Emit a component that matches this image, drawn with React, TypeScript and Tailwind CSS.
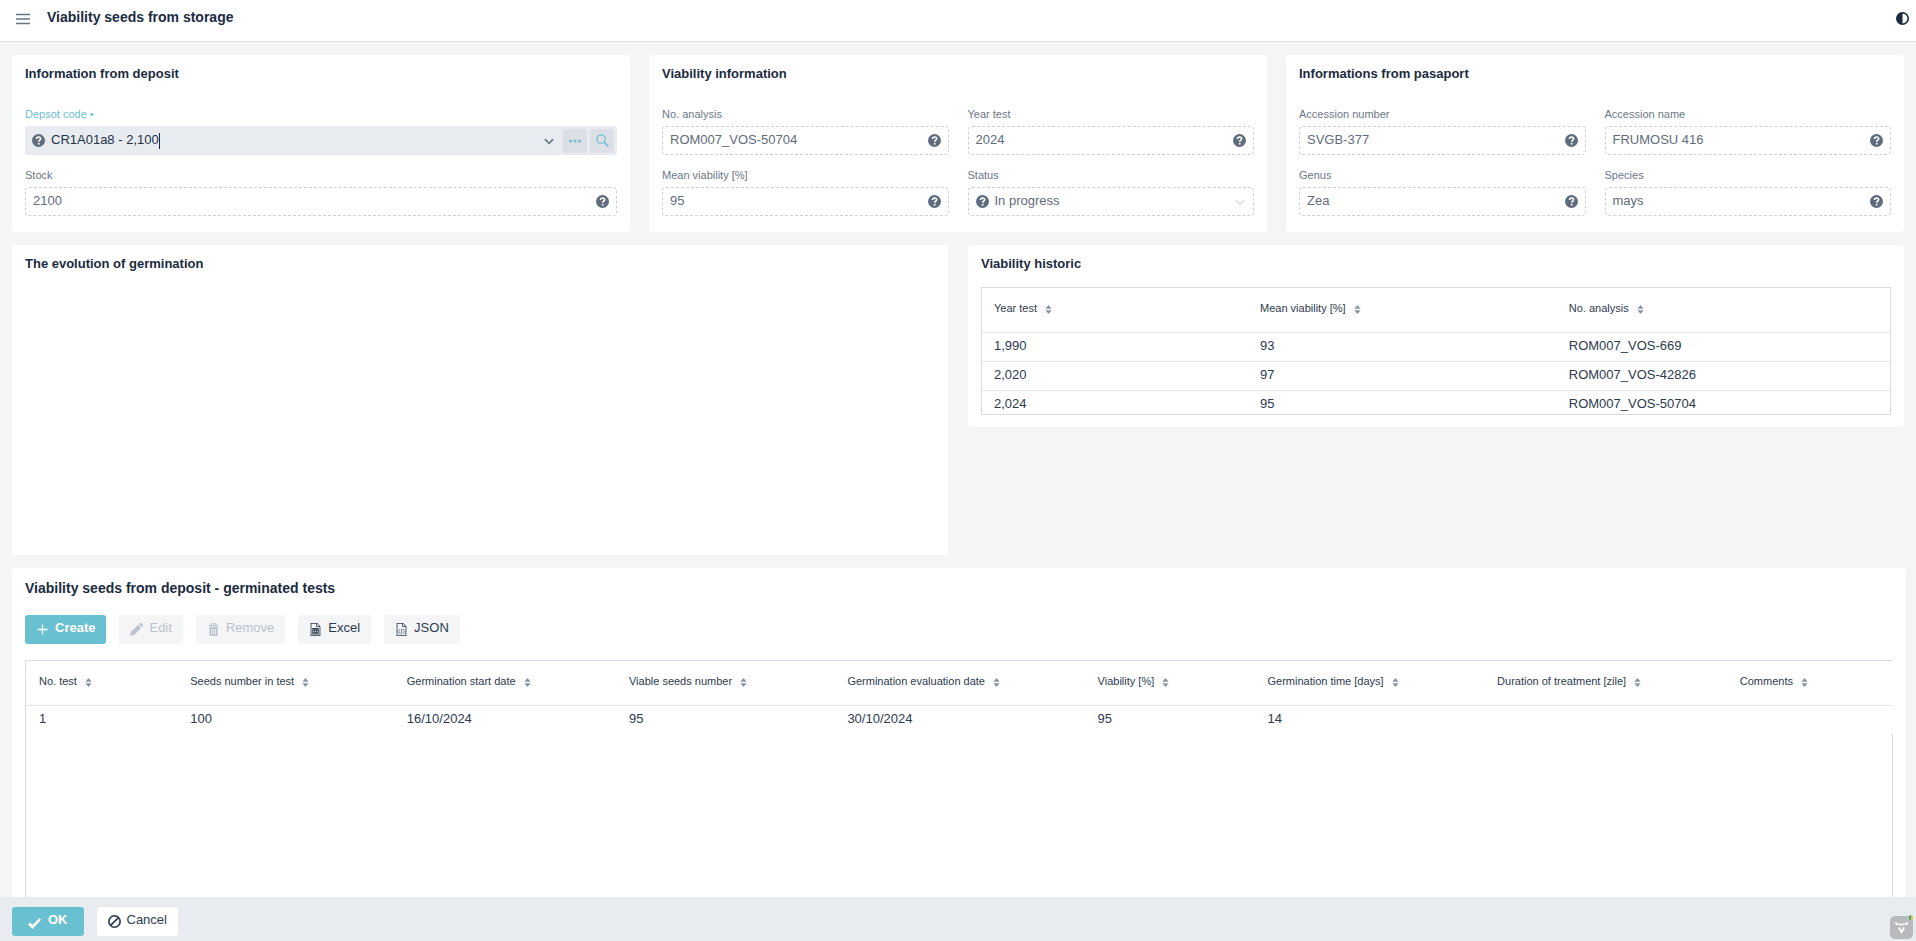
import { useId, type ReactNode } from "react";

type IconProps = { className?: string };

function Svg({ className = "size-4", children }: IconProps & { children: ReactNode }) {
  return (
    <svg viewBox="0 0 16 16" fill="currentColor" aria-hidden="true" className={`shrink-0 ${className}`}>
      {children}
    </svg>
  );
}

function HelpIcon() {
  return (
    <svg viewBox="0 0 16 16" fill="none" aria-hidden="true" className="size-[13px] shrink-0 text-[#5f6c7d]">
      <circle cx="8" cy="8" r="8" fill="currentColor" />
      <path d="M5.6 6.2c0-1.5 1-2.5 2.5-2.5s2.5.9 2.5 2.2c0 1.7-2.3 1.8-2.3 3.6" stroke="#fff" strokeWidth="2" />
      <path d="M7.2 10.9h2.1V13H7.2z" fill="#fff" />
    </svg>
  );
}

function ChevronIcon({ className }: IconProps) {
  return (
    <svg viewBox="0 0 16 16" fill="none" stroke="currentColor" strokeWidth="2.2" aria-hidden="true" className={`shrink-0 ${className}`}>
      <path d="m2.500 5.500 5.500 5.500 5.500-5.500" />
    </svg>
  );
}

function SortIcon() {
  return (
    <Svg className="mt-1 size-[9px] text-[#8793a5]">
      <path d="M8 0 13.5 6.500h-11z" />
      <path d="M8 16 2.500 9.500h11z" />
    </Svg>
  );
}

function SortButton({ label }: { label: string }) {
  return (
    <button type="button" className="flex items-center gap-[7px] pb-1 whitespace-nowrap">
      {label}
      <SortIcon />
    </button>
  );
}

function Card({ title, className = "", children }: { title: string; className?: string; children?: ReactNode }) {
  return (
    <section className={`rounded-[3px] bg-white px-[13px] pt-[9px] ${className}`}>
      <h3 className="text-[13px] leading-5 font-bold text-[#1b2b41]">{title}</h3>
      {children}
    </section>
  );
}

function ReadOnlyField({ label, value }: { label: string; value: string }) {
  const id = useId();
  return (
    <div className="flex min-w-0 flex-col gap-1">
      <label htmlFor={id} className="text-[11px] leading-4 text-[#6b7889]">{label}</label>
      <div className="flex h-[29px] items-center rounded-[4px] border border-dashed border-[#cdd1d8] px-[7px]">
        <input id={id} readOnly value={value} className="min-w-0 flex-1 pb-0.5 text-[13px] text-[#5f6c7d] outline-none" />
        <HelpIcon />
      </div>
    </div>
  );
}

function StatusField() {
  return (
    <div className="flex min-w-0 flex-col gap-1">
      <label htmlFor="status" className="text-[11px] leading-4 text-[#6b7889]">Status</label>
      <div className="flex h-[29px] items-center gap-[6px] rounded-[4px] border border-dashed border-[#cdd1d8] px-[7px]">
        <HelpIcon />
        <select id="status" disabled className="min-w-0 flex-1 appearance-none pb-0.5 text-[13px] text-[#5f6c7d] opacity-100">
          <option>In progress</option>
        </select>
        <ChevronIcon className="size-3 text-[#dde2e8]" />
      </div>
    </div>
  );
}

function DepositCodeField() {
  return (
    <div className="flex flex-col gap-1">
      <label htmlFor="deposit-code" className="text-[11px] leading-4 text-[#69c0d1]">Depsot code •</label>
      <div className="flex h-[29px] items-center rounded-[3px] bg-[#e8ebef] pr-[3px] pl-[7px]">
        <HelpIcon />
        <div className="ml-[6px] flex min-w-0 flex-1 items-center">
          <input
            id="deposit-code"
            defaultValue="CR1A01a8 - 2,100"
            className="field-sizing-content pb-0.5 text-[13px] text-[#243348] outline-none"
          />
          <span className="h-4 w-px bg-[#1b2b41]" />
        </div>
        <button type="button" aria-label="Open list" className="mr-2">
          <ChevronIcon className="size-3 text-[#66748a]" />
        </button>
        <button type="button" aria-label="More" className="flex size-6 items-center justify-center rounded-[3px] bg-[#dce0e6] text-[#69c0d1]">
          <Svg className="size-3">
            <circle cx="2" cy="8" r="2" />
            <circle cx="8" cy="8" r="2" />
            <circle cx="14" cy="8" r="2" />
          </Svg>
        </button>
        <button type="button" aria-label="Search" className="ml-[3px] flex size-6 items-center justify-center rounded-[3px] bg-[#dce0e6] text-[#69c0d1]">
          <svg viewBox="0 0 16 16" fill="none" stroke="currentColor" aria-hidden="true" className="size-[13px]">
            <circle cx="6.2" cy="6.2" r="5.2" strokeWidth="1.5" />
            <path d="m10 10 5.2 5.2" strokeWidth="2" />
          </svg>
        </button>
      </div>
    </div>
  );
}

const history = [
  ["1,990", "93", "ROM007_VOS-669"],
  ["2,020", "97", "ROM007_VOS-42826"],
  ["2,024", "95", "ROM007_VOS-50704"],
];

function HistoryTable() {
  return (
    <div className="mt-[13px] h-32 overflow-hidden border border-[#d8dce2]">
      <table className="w-full table-fixed text-left text-[13px] text-[#2c3b50]">
        <colgroup>
          <col className="w-[29.3%]" />
          <col className="w-[34%]" />
          <col />
        </colgroup>
        <thead>
          <tr className="h-[44px] border-b border-[#e4e7eb] text-[11px]">
            {["Year test", "Mean viability [%]", "No. analysis"].map((label) => (
              <th key={label} className="pl-3 font-normal"><SortButton label={label} /></th>
            ))}
          </tr>
        </thead>
        <tbody>
          {history.map((row) => (
            <tr key={row[0]} className="h-[29px] border-b border-[#e4e7eb]">
              {row.map((cell) => (
                <td key={cell} className="pb-0.5 pl-3">{cell}</td>
              ))}
            </tr>
          ))}
        </tbody>
      </table>
    </div>
  );
}

const testColumns = [
  { label: "No. test", value: "1", width: "w-[8.1%]" },
  { label: "Seeds number in test", value: "100", width: "w-[11.6%]" },
  { label: "Germination start date", value: "16/10/2024", width: "w-[11.9%]" },
  { label: "Viable seeds number", value: "95", width: "w-[11.7%]" },
  { label: "Germination evaluation date", value: "30/10/2024", width: "w-[13.4%]" },
  { label: "Viability [%]", value: "95", width: "w-[9.1%]" },
  { label: "Germination time [days]", value: "14", width: "w-[12.3%]" },
  { label: "Duration of treatment [zile]", value: "", width: "w-[13%]" },
  { label: "Comments", value: "", width: "w-[8.9%]" },
];

function TestsTable() {
  return (
    <div className="mt-4 flex-1 border-x border-t border-[#d8dce2]">
      <div className="-mr-px bg-white">
        <table className="w-full table-fixed text-left text-[13px] text-[#2c3b50]">
          <thead>
            <tr className="h-[44px] border-b border-[#e4e7eb] text-[11px]">
              {testColumns.map((col) => (
                <th key={col.label} className={`pl-[13px] font-normal ${col.width}`}><SortButton label={col.label} /></th>
              ))}
            </tr>
          </thead>
          <tbody>
            <tr className="h-[29px]">
              {testColumns.map((col) => (
                <td key={col.label} className="pb-0.5 pl-[13px]">{col.value}</td>
              ))}
            </tr>
          </tbody>
        </table>
      </div>
    </div>
  );
}

function Toolbar() {
  const plain = "flex h-[29px] items-center gap-[6px] rounded-[3px] bg-[#f3f5f7] px-[11px]";
  return (
    <div className="mt-[15px] flex gap-[13px] text-[13px]">
      <button type="button" className="flex h-[29px] items-center gap-[6px] rounded-[3px] bg-[#69c0d1] px-[11px] font-bold text-white">
        <Svg className="size-[13px]">
          <path d="M7.200 2h1.600v5.200H14v1.600H8.800V14H7.200V8.800H2V7.200h5.200z" />
        </Svg>
        <span className="pb-1">Create</span>
      </button>
      <button type="button" disabled className={`${plain} text-[#bcc3cd]`}>
        <Svg className="size-[13px]">
          <path d="M0 16l1.200-5L9.800 2.400l3.800 3.800L5 14.800zM11 1.600l1.200-1.200c.5-.5 1.400-.5 1.900 0l1.500 1.500c.5.5.5 1.400 0 1.900l-1.200 1.200z" />
        </Svg>
        <span className="pb-1">Edit</span>
      </button>
      <button type="button" disabled className={`${plain} text-[#bcc3cd]`}>
        <Svg className="size-[13px]">
          <path
            fillRule="evenodd"
            d="M3 5v9.500c0 .8.500 1.500 1.300 1.500h7.400c.8 0 1.300-.7 1.300-1.500V5zm3 9H5V7h1zm2.500 0h-1V7h1zM11 14h-1V7h1zM13.500 2H11V1c0-.6-.4-1-1-1H6c-.6 0-1 .4-1 1v1H2.500L2 4h12zM10 2H6V1h4z"
          />
        </Svg>
        <span className="pb-1">Remove</span>
      </button>
      <button type="button" className={`${plain} text-[#2c3b50]`}>
        <Svg className="size-[13px]">
          <path fillRule="evenodd" d="M10 0H2v16h12V4zM9 1v4h4v10H3V1zm1 0 3 3h-3z" />
          <path fillRule="evenodd" d="M4 6h8v8H4zm1 2v1h1.500V8zm2.500 0v1H9V8zM10 8v1h1V8zm-5 2v1h1.500v-1zm2.500 0v1H9v-1zm2.500 0v1h1v-1zm-5 2v1h1.500v-1zm2.500 0v1H9v-1zm2.500 0v1h1v-1z" />
        </Svg>
        <span className="pb-1">Excel</span>
      </button>
      <button type="button" className={`${plain} text-[#2c3b50]`}>
        <Svg className="size-[13px]">
          <path fillRule="evenodd" d="M10 0H2v16h12V4zM9 1v4h4v10H3V1zm1 0 3 3h-3z" />
          <path d="M6.200 7.500 4 10.500l2.200 3M9.800 7.500l2.200 3-2.200 3M8.600 7l-1.200 7" fill="none" stroke="currentColor" strokeWidth=".8" />
        </Svg>
        <span className="pb-1">JSON</span>
      </button>
    </div>
  );
}

export default function App() {
  return (
    <div className="flex min-h-screen flex-col bg-[#f3f5f7] font-['Liberation_Sans',Arial,sans-serif] text-[#2c3b50]">
      <header className="flex h-[42px] items-center border-b border-[#dce0e5] bg-white pr-[7px] pl-4">
        <button type="button" aria-label="Menu" className="-mt-1">
          <svg viewBox="0 0 14 12" aria-hidden="true" className="h-3 w-[14px] text-[#66748a]">
            <path d="M0 1.500h14M0 6h14M0 10.500h14" stroke="currentColor" strokeWidth="1.500" />
          </svg>
        </button>
        <h1 className="ml-[17px] flex-1 pb-2 text-sm font-bold text-[#1b2b41]">Viability seeds from storage</h1>
        <button type="button" aria-label="Toggle theme" className="-mt-1">
          <Svg className="size-[13px] text-[#1b2b41]">
            <path fillRule="evenodd" d="M8 0a8 8 0 1 0 0 16A8 8 0 0 0 8 0m0 2a6 6 0 0 1 0 12z" />
          </Svg>
        </button>
      </header>

      <main className="flex flex-1 flex-col gap-[13px] pt-[13px] pl-3">
        <div className="grid grid-cols-3 gap-[19px] pr-3">
          <Card title="Information from deposit" className="pb-4">
            <div className="mt-[22px] grid gap-3">
              <DepositCodeField />
              <ReadOnlyField label="Stock" value="2100" />
            </div>
          </Card>
          <Card title="Viability information" className="pb-4">
            <div className="mt-[22px] grid grid-cols-2 gap-x-[19px] gap-y-3">
              <ReadOnlyField label="No. analysis" value="ROM007_VOS-50704" />
              <ReadOnlyField label="Year test" value="2024" />
              <ReadOnlyField label="Mean viability [%]" value="95" />
              <StatusField />
            </div>
          </Card>
          <Card title="Informations from pasaport" className="pb-4">
            <div className="mt-[22px] grid grid-cols-2 gap-x-[19px] gap-y-3">
              <ReadOnlyField label="Accession number" value="SVGB-377" />
              <ReadOnlyField label="Accession name" value="FRUMOSU 416" />
              <ReadOnlyField label="Genus" value="Zea" />
              <ReadOnlyField label="Species" value="mays" />
            </div>
          </Card>
        </div>

        <div className="grid grid-cols-2 items-start gap-5 pr-3">
          <Card title="The evolution of germination" className="min-h-[310px]" />
          <Card title="Viability historic" className="pb-3">
            <HistoryTable />
          </Card>
        </div>

        <section className="mr-[10px] flex flex-1 flex-col rounded-t-[3px] bg-white px-[13px] pt-2">
          <h2 className="text-sm leading-6 font-bold text-[#1b2b41]">Viability seeds from deposit - germinated tests</h2>
          <Toolbar />
          <TestsTable />
        </section>
      </main>

      <footer className="sticky bottom-0 flex gap-[13px] bg-[#e8ebef] px-3 pt-[10px] pb-[5px] text-[13px]">
        <button type="button" className="flex h-[29px] items-center gap-[7px] rounded-[3px] bg-[#69c0d1] px-4 font-bold text-white">
          <Svg className="mt-0.5 size-[13px]">
            <path d="M14 2.500l-8.500 8.500-3-3L0 10.500l5.500 5.500L16 4.500z" />
          </Svg>
          <span className="pb-1">OK</span>
        </button>
        <button type="button" className="flex h-[29px] items-center gap-[6px] rounded-[3px] bg-white px-[11px]">
          <Svg className="size-[13px]">
            <path fillRule="evenodd" d="M8 0a8 8 0 1 0 0 16A8 8 0 0 0 8 0m0 2c1.300 0 2.500.4 3.500 1.100l-8.400 8.400A6 6 0 0 1 8 2m0 12c-1.300 0-2.500-.4-3.500-1.100l8.400-8.400A6 6 0 0 1 8 14" />
          </Svg>
          <span className="pb-1">Cancel</span>
        </button>
      </footer>

      <button type="button" aria-label="Development tools" className="fixed right-[3px] bottom-0.5 size-[23px] rounded-[5px] bg-[#b8babd]">
        <svg viewBox="0 0 23 23" fill="none" stroke="#fff" aria-hidden="true" className="size-full">
          <path d="M6 6v1.200c0 .8.500 1.100 1.200 1.100h2.600c1 0 1.700.3 1.700 1.100 0-.8.7-1.100 1.700-1.100h2.600c.7 0 1.200-.3 1.200-1.100V6" strokeWidth="1.500" />
          <path d="m8.800 11.500 2.700 4.700 2.700-4.700" strokeWidth="1.900" />
        </svg>
        <span className="absolute -top-px right-0 flex h-[5px] w-1 overflow-hidden rounded-full">
          <span className="flex-1 bg-[#1fb86a]" />
          <span className="flex-1 bg-[#ffb547]" />
        </span>
      </button>
    </div>
  );
}
